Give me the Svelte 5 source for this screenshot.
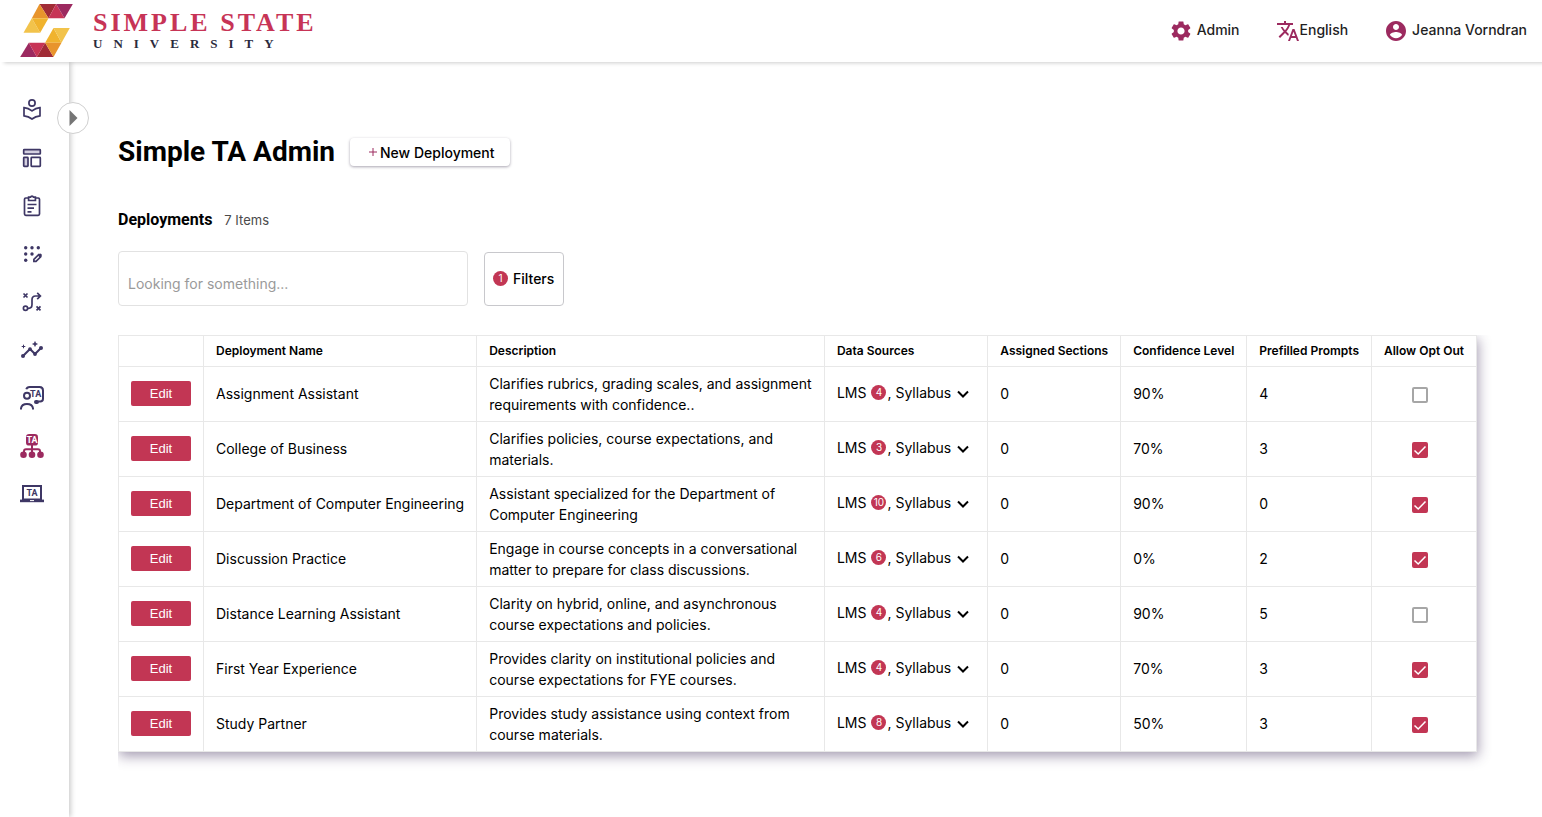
<script lang="ts">
	type Deployment = {
		name: string;
		description: string;
		sources: number;
		sections: number;
		confidence: number;
		prompts: number;
		optOut: boolean;
	};

	let search = $state('');
	let expanded = $state(false);
	let deployments = $state<Deployment[]>([
		{
			name: 'Assignment Assistant',
			description:
				'Clarifies rubrics, grading scales, and assignment requirements with confidence..',
			sources: 4,
			sections: 0,
			confidence: 90,
			prompts: 4,
			optOut: false,
		},
		{
			name: 'College of Business',
			description: 'Clarifies policies, course expectations, and materials.',
			sources: 3,
			sections: 0,
			confidence: 70,
			prompts: 3,
			optOut: true,
		},
		{
			name: 'Department of Computer Engineering',
			description:
				'Assistant specialized for the Department of Computer Engineering',
			sources: 10,
			sections: 0,
			confidence: 90,
			prompts: 0,
			optOut: true,
		},
		{
			name: 'Discussion Practice',
			description:
				'Engage in course concepts in a conversational matter to prepare for class discussions.',
			sources: 6,
			sections: 0,
			confidence: 0,
			prompts: 2,
			optOut: true,
		},
		{
			name: 'Distance Learning Assistant',
			description:
				'Clarity on hybrid, online, and asynchronous course expectations and policies.',
			sources: 4,
			sections: 0,
			confidence: 90,
			prompts: 5,
			optOut: false,
		},
		{
			name: 'First Year Experience',
			description:
				'Provides clarity on institutional policies and course expectations for FYE courses.',
			sources: 4,
			sections: 0,
			confidence: 70,
			prompts: 3,
			optOut: true,
		},
		{
			name: 'Study Partner',
			description:
				'Provides study assistance using context from course materials.',
			sources: 8,
			sections: 0,
			confidence: 50,
			prompts: 3,
			optOut: true,
		},
	]);

	const shown = $derived(
		deployments.filter((d) =>
			d.name.toLowerCase().includes(search.toLowerCase()),
		),
	);

	const nav = [
		{ id: 'library', label: 'Library' },
		{ id: 'layout', label: 'Templates' },
		{ id: 'clipboard', label: 'Assignments' },
		{ id: 'design', label: 'Design' },
		{ id: 'path', label: 'Pathways' },
		{ id: 'insights', label: 'Insights' },
		{ id: 'support', label: 'TA Support' },
		{ id: 'ta-admin', label: 'TA Admin' },
		{ id: 'ta-laptop', label: 'TA Workspace' },
	];
	const active = 'ta-admin';
</script>

{#snippet navIcon(id: string)}
	<svg class="line" viewBox="0 0 24 24" width="24" height="24" aria-hidden="true">
		{#if id === 'library'}
			<circle cx="12" cy="5" r="3.1" />
			<path d="M4 9.6c3 .3 5.700 1.500 8 3.300 2.300-1.800 5-3 8-3.300v8.200c-3 .3-5.700 1.400-8 3.200-2.300-1.800-5-2.900-8-3.200z" />
		{:else if id === 'layout'}
			<rect x="3.700" y="3.700" width="16.600" height="4.300" rx=".6" class="tint" />
			<rect x="3.700" y="11.400" width="4.300" height="8.900" rx=".6" class="tint" />
			<rect x="11.200" y="11.400" width="9.100" height="8.900" rx=".6" />
		{:else if id === 'clipboard'}
			<rect x="4.500" y="4" width="15" height="17.300" rx="1.300" />
			<path d="M8.600 6.500V3.200h1.900a1.600 1.600 0 0 1 3 0h1.900v3.300z" fill="#fff" />
			<path d="M7.500 10.500h9M7.500 14.200h6.500M7.500 17.900h4" />
		{:else if id === 'design'}
			<g class="solid">
				<circle cx="5.700" cy="5.700" r="1.700" />
				<circle cx="12" cy="5.700" r="1.700" />
				<circle cx="18.300" cy="5.700" r="1.700" />
				<circle cx="5.700" cy="12" r="1.700" />
				<circle cx="12" cy="12" r="1.700" />
				<circle cx="5.700" cy="18.300" r="1.700" />
				<path d="M17.700 13.300l1.700-1.500q1-.7 1.900.3t.2 2l-1.400 1.600z" />
			</g>
			<path d="M13.900 19.400v-2.100l4.700-4.600 2.100 2.100-4.700 4.600z" />
		{:else if id === 'path'}
			<path d="M3.500 3.500l4 4m0-4l-4 4M16.500 16.300l4 4m0-4l-4 4" />
			<circle cx="5.500" cy="18.300" r="2.100" />
			<path d="M7.700 18.300h.8Q12 18.300 12 14.500V9.800Q12 6 15.500 6h4.800M17.200 2.800L20.400 6l-3.200 3.200" />
		{:else if id === 'insights'}
			<path d="M3 18l7-7 5 5 6-6" class="thick" />
			<g class="solid">
				<circle cx="3" cy="18" r="2" />
				<circle cx="10" cy="11.200" r="1.900" />
				<circle cx="15" cy="16" r="1.900" />
				<circle cx="21" cy="10" r="2" />
				<path d="M15 3l.8 2.200 2.200.8-2.200.8L15 9l-.8-2.200L12 6l2.200-.8z" />
			</g>
			<path d="M12.700 6h4.600M15 3.700v4.600M1.700 8.500h3.600M3.500 6.700v3.600" class="thin" />
		{:else if id === 'support'}
			<circle cx="7" cy="9.700" r="3" class="thick" />
			<path d="M1 23.500v-1.200c.4-3 3-4.400 6-4.400s5.600 1.400 6 4.400v1.200" class="thick" />
			<path d="M6.300 3.300Q7 1 9.600 1h10Q23 1 23 4.500v8.300q0 2.800-2.800 2.800h-2" class="thick" />
			<rect x="14" y="14" width="5" height="4" rx="2" class="solid" />
			<text x="15.700" y="11.100" class="ta">TA</text>
		{:else if id === 'ta-admin'}
			<rect x="6" y="0" width="12" height="11.600" rx="3.200" class="solid" />
			<text x="12" y="9.300" class="ta light">TA</text>
			<path d="M12 11v8M4 19v-1.700q0-2 2-2h12q2 0 2 2V19" class="thick" />
			<g class="solid">
				<circle cx="3.500" cy="20.700" r="3.300" />
				<circle cx="12" cy="20.700" r="3.300" />
				<circle cx="20.500" cy="20.700" r="3.300" />
			</g>
		{:else}
			<rect x="3" y="4" width="18" height="13.500" class="thick" />
			<path d="M0 17.600h24v2.600H0z" class="solid" />
			<path d="M10 18.600h4" stroke="#fff" class="thin" />
			<text x="12" y="13.800" class="ta">TA</text>
		{/if}
	</svg>
{/snippet}

<div class="page">
	<header>
		<a class="brand" href="#home">
			<svg viewBox="60 12 158 159" width="53" height="53" aria-hidden="true">
				<path fill="#a12c36" d="M118 12h50l-23 43z" />
				<path fill="#c73456" d="M168 12l25 43h-48z" />
				<path fill="#9c2a60" d="M168 12h50l-25 43z" />
				<path fill="#e8942c" d="M118 12l27 43H95z" />
				<path fill="#f2c34b" d="M95 55l25 43H70z" />
				<path fill="#f0b32e" d="M95 55h50l-25 43z" />
				<path fill="#f0b32e" d="M160 84l24 44h-49z" />
				<path fill="#f2c34b" d="M160 84h49l-25 44z" />
				<path fill="#9c2a60" d="M86 128l24 43H60z" />
				<path fill="#c73456" d="M86 128h49l-25 43z" />
				<path fill="#a12c36" d="M135 128l25 43h-50z" />
				<path fill="#e8942c" d="M135 128h49l-24 43z" />
			</svg>
			<span class="wordmark">
				<span class="state">SIMPLE STATE</span>
				<span class="university">UNIVERSITY</span>
			</span>
		</a>
		<nav class="account" aria-label="Account">
			<a href="#admin">
				<svg viewBox="0 0 24 24" width="24" height="24" aria-hidden="true">
					<path d="M19.140 12.940c.04-.3.06-.61.06-.94 0-.32-.02-.64-.07-.94l2.030-1.580c.18-.14.23-.41.12-.61l-1.920-3.320c-.12-.22-.37-.29-.59-.22l-2.390.96c-.5-.38-1.030-.7-1.620-.94l-.36-2.540c-.04-.24-.24-.41-.48-.41h-3.840c-.24 0-.43.17-.47.41l-.36 2.540c-.59.24-1.130.57-1.620.94l-2.390-.96c-.22-.08-.47 0-.59.22L2.740 8.870c-.12.21-.08.47.12.61l2.030 1.580c-.05.3-.09.63-.09.94s.02.64.07.94l-2.030 1.580c-.18.14-.23.41-.12.61l1.920 3.320c.12.22.37.29.59.22l2.390-.96c.5.38 1.030.7 1.620.94l.36 2.540c.05.24.24.41.48.41h3.840c.24 0 .44-.17.47-.41l.36-2.540c.59-.24 1.130-.56 1.620-.94l2.390.96c.22.08.47 0 .59-.22l1.920-3.320c.12-.22.07-.47-.12-.61l-2.010-1.580zM12 15.600c-1.980 0-3.600-1.620-3.600-3.600s1.620-3.600 3.600-3.600 3.600 1.620 3.600 3.600-1.620 3.600-3.600 3.600z" />
				</svg>
				<span>Admin</span>
			</a>
			<a href="#language" class="tight">
				<svg viewBox="0 0 24 24" width="24" height="24" aria-hidden="true">
					<path d="M12.870 15.070l-2.540-2.510.03-.03c1.740-1.940 2.980-4.170 3.710-6.530H17V4h-7V2H8v2H1v1.990h11.170C11.500 7.920 10.440 9.750 9 11.350 8.070 10.320 7.300 9.190 6.690 8h-2c.73 1.630 1.730 3.170 2.980 4.560l-5.090 5.020L4 19l5-5 3.110 3.110.76-2.040zM18.500 10h-2L12 22h2l1.120-3h4.750L21 22h2l-4.500-12zm-2.620 7l1.620-4.330L19.120 17h-3.240z" />
				</svg>
				<span>English</span>
			</a>
			<a href="#profile">
				<svg viewBox="0 0 24 24" width="24" height="24" aria-hidden="true">
					<path d="M12 2C6.480 2 2 6.480 2 12s4.480 10 10 10 10-4.480 10-10S17.520 2 12 2zm0 3c1.660 0 3 1.340 3 3s-1.340 3-3 3-3-1.340-3-3 1.340-3 3-3zm0 14.200c-2.500 0-4.710-1.280-6-3.220.03-1.990 4-3.080 6-3.080 1.990 0 5.990 1.090 6 3.080-1.290 1.940-3.500 3.220-6 3.220z" />
				</svg>
				<span>Jeanna Vorndran</span>
			</a>
		</nav>
	</header>

	<div class="body">
		<aside>
			<nav class="side" aria-label="Main">
				{#each nav as item (item.id)}
					<a
						href="#{item.id}"
						class:active={item.id === active}
						aria-label={item.label}
					>
						{@render navIcon(item.id)}
					</a>
				{/each}
			</nav>
			<button
				type="button"
				class="toggle"
				aria-label="Expand menu"
				aria-expanded={expanded}
				onclick={() => (expanded = !expanded)}
			>
				<svg viewBox="0 0 8 16" width="9" height="16" aria-hidden="true">
					<path d="M0 0l8 8-8 8z" />
				</svg>
			</button>
		</aside>

		<main>
			<div class="title">
				<h1>Simple TA Admin</h1>
				<button type="button" class="new">
					<svg viewBox="0 0 10 10" width="10" height="10" aria-hidden="true">
						<path d="M1 5h8M5 1v8" />
					</svg>
					New Deployment
				</button>
			</div>

			<div class="subtitle">
				<h2>Deployments</h2>
				<span>{shown.length} Items</span>
			</div>

			<div class="tools">
				<input
					type="search"
					aria-label="Search deployments"
					placeholder="Looking for something..."
					bind:value={search}
				/>
				<button type="button" class="filters">
					<span class="badge">1</span>
					Filters
				</button>
			</div>

			<div class="table-wrap">
				<table>
					<thead>
						<tr>
							<th aria-label="Actions"></th>
							<th>Deployment Name</th>
							<th class="wide">Description</th>
							<th>Data Sources</th>
							<th>Assigned Sections</th>
							<th>Confidence Level</th>
							<th>Prefilled Prompts</th>
							<th>Allow Opt Out</th>
						</tr>
					</thead>
					<tbody>
						{#each shown as d (d.name)}
							<tr>
								<td><button type="button" class="edit">Edit</button></td>
								<td>{d.name}</td>
								<td class="wide">{d.description}</td>
								<td>
									<button type="button" class="sources">
										<span>LMS</span>
										<span class="badge">{d.sources}</span>
										<span class="more">, Syllabus</span>
										<svg viewBox="0 0 12 8" width="12" height="8" aria-hidden="true">
											<path d="M1 1.500l5 5 5-5" />
										</svg>
									</button>
								</td>
								<td>{d.sections}</td>
								<td>{d.confidence}%</td>
								<td>{d.prompts}</td>
								<td>
									<label class="check">
										<input
											type="checkbox"
											aria-label="Allow opt out of {d.name}"
											bind:checked={d.optOut}
										/>
										<svg viewBox="0 0 16 16" width="16" height="16" aria-hidden="true">
											<path d="M2.500 8.500l3.700 3.500L13.500 4.500" />
										</svg>
									</label>
								</td>
							</tr>
						{/each}
					</tbody>
				</table>
			</div>
		</main>
	</div>
</div>

<style>
	:global(body) {
		margin: 0;
		background: #fff;
	}
	.page {
		--red: #c23654;
		--plum: #9c2a5f;
		--navy: #3e3765;
		min-height: 100vh;
		display: flex;
		flex-direction: column;
		font-family: Inter, 'Liberation Sans', sans-serif;
		font-size: 14px;
		line-height: 21px;
		color: #000;
	}
	svg {
		display: block;
		flex: none;
	}
	a {
		color: inherit;
		text-decoration: none;
	}
	button,
	input {
		font: inherit;
		color: inherit;
		margin: 0;
		box-sizing: border-box;
	}
	button {
		cursor: pointer;
	}

	/* header */
	header {
		position: relative;
		z-index: 2;
		display: flex;
		align-items: center;
		justify-content: space-between;
		height: 62px;
		padding: 0 15px 0 20px;
		background: #fff;
		box-shadow: 4px 1px 4px rgba(0, 0, 0, 0.2);
	}
	.brand {
		display: flex;
		align-items: center;
		gap: 20px;
		padding-bottom: 1px;
	}
	.wordmark {
		display: flex;
		flex-direction: column;
		font-family: 'Liberation Serif', serif;
		font-weight: 700;
	}
	.state {
		font-size: 26px;
		line-height: 26px;
		letter-spacing: 3px;
		color: #c73456;
	}
	.university {
		font-size: 13px;
		line-height: 16px;
		letter-spacing: 11px;
		color: #2b2b3d;
	}
	.account {
		display: flex;
		gap: 36px;
		font-weight: 500;
		color: #1f1f1f;
	}
	.account a {
		display: flex;
		align-items: center;
		gap: 4px;
	}
	.account a.tight {
		gap: 0;
	}
	.account span {
		padding-bottom: 3px;
	}
	.account svg {
		fill: var(--plum);
	}

	/* sidebar */
	.body {
		flex: 1;
		display: flex;
	}
	aside {
		position: relative;
		flex: none;
		width: 69px;
		background: #fff;
		box-shadow: 2px 0 5px rgba(0, 0, 0, 0.2);
	}
	.side {
		display: flex;
		flex-direction: column;
		gap: 24px;
		padding: 36px 0 36px 20px;
	}
	.side a {
		width: 24px;
		color: var(--navy);
	}
	.side a.active {
		color: var(--plum);
	}
	.line {
		fill: none;
		stroke: currentColor;
		stroke-width: 1.7;
	}
	.line .thick {
		stroke-width: 2;
	}
	.line .thin {
		stroke-width: 1;
	}
	.line .tint {
		fill: #d4d0e0;
	}
	.line .solid {
		fill: currentColor;
		stroke: none;
	}
	.line .ta {
		fill: currentColor;
		stroke: none;
		font-family: Roboto, sans-serif;
		font-size: 9px;
		font-weight: 700;
		text-anchor: middle;
	}
	.line .ta.light {
		fill: #fff;
	}
	.toggle {
		position: absolute;
		top: 40px;
		right: -20px;
		display: flex;
		align-items: center;
		justify-content: center;
		width: 32px;
		height: 32px;
		padding: 0;
		border: 1px solid #d0d0d0;
		border-radius: 50%;
		background: #fff;
	}
	.toggle svg {
		fill: #757575;
	}

	/* content */
	main {
		flex: 1;
		min-width: 0;
		padding: 72px 50px 40px 49px;
	}
	.title {
		display: flex;
		align-items: center;
		gap: 15px;
	}
	h1,
	h2 {
		margin: 0;
		font-family: Roboto, sans-serif;
		font-weight: 700;
	}
	h1 {
		font-size: 28px;
		line-height: 36px;
	}
	.new {
		display: flex;
		align-items: center;
		gap: 2px;
		height: 28px;
		padding: 0 15px 0 18px;
		border: 0;
		border-radius: 4px;
		background: #fff;
		font-weight: 500;
		box-shadow: 0 1px 3px rgba(40, 30, 60, 0.4);
	}
	.new svg {
		stroke: var(--plum);
		stroke-width: 1;
	}
	.subtitle {
		display: flex;
		align-items: baseline;
		gap: 12px;
		margin-top: 38px;
	}
	h2 {
		font-size: 16px;
		line-height: 24px;
	}
	.subtitle span {
		font-size: 13px;
		color: #4a4a4a;
	}
	.tools {
		display: flex;
		align-items: center;
		gap: 16px;
		margin: 19px 0 29px;
	}
	.tools input {
		width: 350px;
		height: 55px;
		padding: 10px 9px 0;
		border: 1px solid #e2e2e2;
		border-radius: 4px;
		background: #fff;
		appearance: none;
	}
	.tools input::placeholder {
		color: #9a9a9a;
		opacity: 1;
	}
	.filters {
		display: flex;
		align-items: center;
		gap: 5px;
		height: 54px;
		padding: 0 9px 0 8px;
		border: 1px solid #c8c8cc;
		border-radius: 4px;
		background: #fff;
		font-weight: 500;
	}
	.badge {
		display: inline-flex;
		align-items: center;
		justify-content: center;
		width: 15px;
		height: 15px;
		border-radius: 50%;
		background: var(--red);
		color: #fff;
		font-size: 10px;
		font-weight: 400;
		line-height: 15px;
	}

	/* table, the wrapper crops the shadow on the left and top */
	.table-wrap {
		overflow: hidden;
		padding: 0 15px 20px 0;
	}
	table {
		width: 100%;
		border-collapse: collapse;
		background: #fff;
		box-shadow: 1px 4px 12px rgba(50, 30, 80, 0.45);
	}
	th,
	td {
		width: 1%;
		padding: 6px 12px;
		border: 1px solid #e8e8e8;
		text-align: left;
		white-space: nowrap;
	}
	th {
		font-size: 12px;
		font-weight: 600;
		line-height: 18px;
	}
	td:not(.wide) {
		padding: 5px 12px 7px;
	}
	.wide {
		width: auto;
		white-space: normal;
	}
	.edit {
		display: block;
		width: 60px;
		height: 25px;
		padding: 0;
		border: 0;
		border-radius: 2px;
		background: var(--red);
		color: #fff;
		font-family: 'Liberation Sans', sans-serif;
		font-size: 13px;
	}
	.sources {
		display: flex;
		align-items: center;
		padding: 0 6px 1px 0;
		border: 0;
		background: none;
	}
	.sources .badge {
		margin: 0 1px 0 5px;
	}
	.sources .more {
		margin-right: 6px;
	}
	.sources svg {
		margin-top: 2px;
		fill: none;
		stroke: #000;
		stroke-width: 2;
	}
	.check {
		position: relative;
		display: block;
		width: 16px;
		height: 16px;
		margin: 4px 0 0 28px;
	}
	.check input {
		display: block;
		width: 16px;
		height: 16px;
		border: 2px solid #a6a6a6;
		border-radius: 2px;
		background: #fff;
		appearance: none;
	}
	.check input:checked {
		border-color: var(--red);
		background: var(--red);
	}
	.check svg {
		position: absolute;
		inset: 0;
		display: none;
		fill: none;
		stroke: #fff;
		stroke-width: 1.5;
		pointer-events: none;
	}
	.check input:checked + svg {
		display: block;
	}
</style>
